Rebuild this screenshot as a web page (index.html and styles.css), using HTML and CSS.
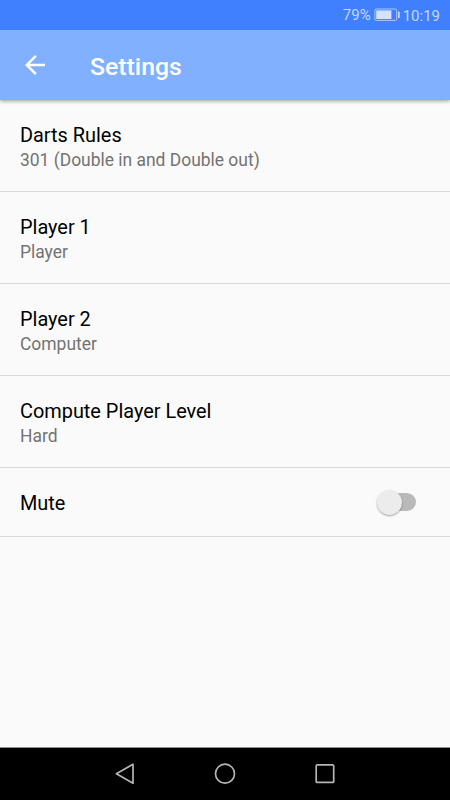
FILE: index.html
```html
<!DOCTYPE html>
<html lang="en">
<head>
<meta charset="utf-8">
<title>Settings</title>
<link rel="stylesheet" href="styles.css">
</head>
<body>
<div class="screen">
  <div class="status-bar">
    <span class="battery-level">79%</span>
    <svg class="battery" width="27" height="14" viewBox="0 0 27 14">
      <rect x="0.9" y="1" width="21.8" height="11.4" rx="1.2" fill="none" stroke="#a9c8ff" stroke-width="1"/>
      <rect x="2.2" y="2.4" width="15.2" height="8.6" fill="#d3e2ff"/>
      <rect x="24" y="3.6" width="1.7" height="6.4" rx=".5" fill="#c5d9ff"/>
    </svg>
    <span class="clock">10:19</span>
  </div>
  <header class="app-bar">
    <svg class="back" width="30" height="30" viewBox="0 0 24 24">
      <path d="M20 11H7.83l5.59-5.59L12 4l-8 8 8 8 1.41-1.41L7.83 13H20v-2z" fill="#fff"/>
    </svg>
    <h1 class="app-title">Settings</h1>
  </header>
  <main class="list">
    <div class="row">
      <div class="title">Darts Rules</div>
      <div class="summary">301 (Double in and Double out)</div>
    </div>
    <div class="row">
      <div class="title">Player 1</div>
      <div class="summary">Player</div>
    </div>
    <div class="row">
      <div class="title">Player 2</div>
      <div class="summary">Computer</div>
    </div>
    <div class="row">
      <div class="title">Compute Player Level</div>
      <div class="summary">Hard</div>
    </div>
    <div class="row row-switch">
      <div class="title">Mute</div>
      <div class="switch"><div class="thumb"></div></div>
    </div>
  </main>
  <nav class="nav-bar">
    <svg width="24" height="24" viewBox="0 0 24 24" fill="none" stroke="#b4b4b4" stroke-width="1.7" stroke-linejoin="round">
      <path d="M20 2.2v19L3.4 11.7z"/>
    </svg>
    <svg width="24" height="24" viewBox="0 0 24 24" fill="none" stroke="#b4b4b4" stroke-width="1.7">
      <circle cx="12" cy="11.7" r="9.5"/>
    </svg>
    <svg width="24" height="24" viewBox="0 0 24 24" fill="none" stroke="#b4b4b4" stroke-width="1.7">
      <rect x="3.2" y="2.9" width="17.5" height="17.5" rx="1"/>
    </svg>
  </nav>
</div>
</body>
</html>
```

FILE: styles.css
```css
* {
  box-sizing: border-box;
}

body {
  margin: 0;
  font-family: Roboto, "Liberation Sans", sans-serif;
}

.screen {
  display: flex;
  flex-direction: column;
  width: 450px;
  height: 800px;
  overflow: hidden;
  background: #fafafa;
}

.status-bar {
  display: flex;
  align-items: center;
  justify-content: flex-end;
  height: 30px;
  padding-right: 10px;
  background: #4080ff;
  color: #c3d8ff;
  font-size: 15px;
  line-height: 28px;
  z-index: 2;
}

.battery {
  margin: 0 2px 0 3px;
}

.clock {
  padding-top: 2px;
}

.app-bar {
  display: flex;
  align-items: center;
  height: 70px;
  padding-left: 20px;
  background: #80b0ff;
  box-shadow: 0 1px 4px rgba(0, 0, 0, 0.4);
  z-index: 1;
}

.app-title {
  margin: 3px 0 0 40px;
  color: #fff;
  font-size: 24.8px;
  font-weight: 500;
  line-height: 30px;
}

.list {
  flex: 1;
}

.row {
  height: 92px;
  padding: 23px 20px 0;
  border-bottom: 1px solid #d9d9d9;
}

.title {
  color: #000;
  font-size: 19.9px;
  line-height: 25px;
}

.summary {
  margin-top: 1px;
  color: #737373;
  font-size: 17.45px;
  line-height: 22px;
}

.row-switch {
  display: flex;
  align-items: flex-start;
  justify-content: space-between;
  height: 69px;
  padding: 23px 34px 0 20px;
}

.switch {
  display: flex;
  align-items: center;
  width: 38px;
  height: 18px;
  margin-top: 2px;
  border-radius: 9px;
  background: #b9b9b9;
}

.thumb {
  flex: none;
  width: 25px;
  height: 25px;
  margin-left: -1px;
  border-radius: 50%;
  background: #ececec;
  box-shadow: 0 1px 2px rgba(0, 0, 0, 0.35);
}

.nav-bar {
  display: flex;
  align-items: center;
  justify-content: center;
  gap: 76px;
  height: 53px;
  border-top: 1px solid #8a8a8a;
  background: #000;
}
```
